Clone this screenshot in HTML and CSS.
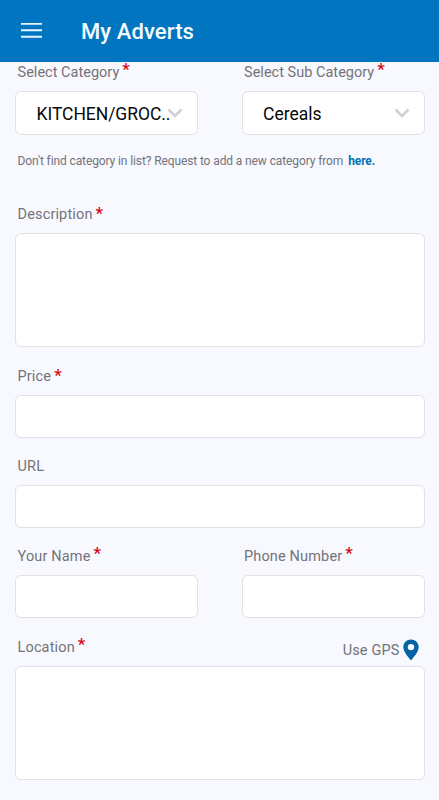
FILE: index.html
```html
<!DOCTYPE html>
<html lang="en">
<head>
<meta charset="utf-8">
<title>My Adverts</title>
<link rel="stylesheet" href="styles.css">
</head>
<body>
<header class="bar">
  <svg class="menu" width="22" height="16" viewBox="0 0 22 16"><path d="M0 .7h21M0 7.200h21M0 13.700h21" stroke="#e6f6ff" stroke-width="2"/></svg>
  <h1 class="title">My Adverts</h1>
</header>
<main class="form">
  <div class="row first">
    <div class="field">
      <div class="label"><span class="snug">Select Category</span><span class="req up">*</span></div>
      <div class="box select"><span class="value kitchen">KITCHEN/GROC..</span><svg class="chev near" width="16" height="10" viewBox="0 0 16 10"><path d="M1.500 1.500 8 8l6.500-6.500" fill="none" stroke="#cfd0d2" stroke-width="2.500"/></svg></div>
    </div>
    <div class="field">
      <div class="label"><span class="snug">Select Sub Category</span><span class="req up">*</span></div>
      <div class="box select"><span class="value">Cereals</span><svg class="chev" width="16" height="10" viewBox="0 0 16 10"><path d="M1.500 1.500 8 8l6.500-6.500" fill="none" stroke="#cfd0d2" stroke-width="2.500"/></svg></div>
    </div>
  </div>
  <p class="note"><span>Don't find category in list? Request to add a new category from</span><b class="link">here.</b></p>
  <div class="field description">
    <div class="label"><span>Description</span><span class="req">*</span></div>
    <div class="box tall"></div>
  </div>
  <div class="field price">
    <div class="label"><span>Price</span><span class="req">*</span></div>
    <div class="box"></div>
  </div>
  <div class="field url">
    <div class="label"><span>URL</span></div>
    <div class="box"></div>
  </div>
  <div class="row contact">
    <div class="field">
      <div class="label"><span>Your Name</span><span class="req up">*</span></div>
      <div class="box"></div>
    </div>
    <div class="field">
      <div class="label"><span>Phone Number</span><span class="req up">*</span></div>
      <div class="box"></div>
    </div>
  </div>
  <div class="field location">
    <div class="label"><span>Location</span><span class="req up">*</span>
      <div class="gps"><span>Use GPS</span><svg width="16" height="22" viewBox="0 0 16 22"><path fill="#0363a5" fill-rule="evenodd" d="M8 .5C3.700.5.3 3.900.3 8.100.3 13.600 8 21.500 8 21.500s7.700-7.900 7.700-13.400C15.700 3.900 12.300.5 8 .5ZM8 4.900a3.200 3.200 0 1 1 0 6.400 3.200 3.200 0 0 1 0-6.400Z"/></svg></div>
    </div>
    <div class="box tall"></div>
  </div>
</main>
</body>
</html>
```
FILE: styles.css
```css
* { box-sizing: border-box; }
body { margin: 0; height: 800px; overflow: hidden; background: #f8f9ff; font-family: Roboto, "Liberation Sans", sans-serif; color: #737378; }
.bar { height: 62px; background: #0275c0; display: flex; align-items: center; padding: 0 0 1px 21px; }
.menu { flex: none; }
.title { margin: 3px 0 0 38px; font-size: 22px; font-weight: 500; line-height: 28px; letter-spacing: .1px; color: #f4fcff; }
.form { padding: 0 14.500px 0 15px; }
.row { display: grid; grid-template-columns: 183px 183px; justify-content: space-between; }
.label { height: 20px; margin-bottom: 9px; padding-left: 2.500px; display: flex; font-size: 14.500px; line-height: 22px; letter-spacing: .15px; white-space: nowrap; }
.snug { letter-spacing: .02px; }
.req { margin-left: 3px; font-size: 17px; line-height: 18px; font-weight: 500; color: #d9060d; letter-spacing: 0; }
.up { line-height: 14px; }
.box { height: 43px; background: #fff; border: 1.500px solid #e1e1e5; border-radius: 6px; }
.tall { height: 114px; }
.select { height: 44px; display: flex; align-items: center; justify-content: space-between; padding: 2px 14px 0 20.500px; }
.value { font-size: 17.500px; line-height: 24px; color: #080808; white-space: nowrap; }
.kitchen { letter-spacing: -.05px; }
.chev { flex: none; margin-top: -2px; }
.near { margin-left: -3px; }
.note { margin: 16px 0 33px 2.500px; height: 20px; display: flex; font-size: 12px; line-height: 20px; letter-spacing: -.11px; white-space: nowrap; }
.link { margin-left: 5px; color: #0272b0; }
.price { margin-top: 19px; }
.url, .contact { margin-top: 18px; }
.location { margin-top: 19px; }
.gps { margin: 2px 6px 0 auto; display: flex; gap: 3px; line-height: 24px; }
```
